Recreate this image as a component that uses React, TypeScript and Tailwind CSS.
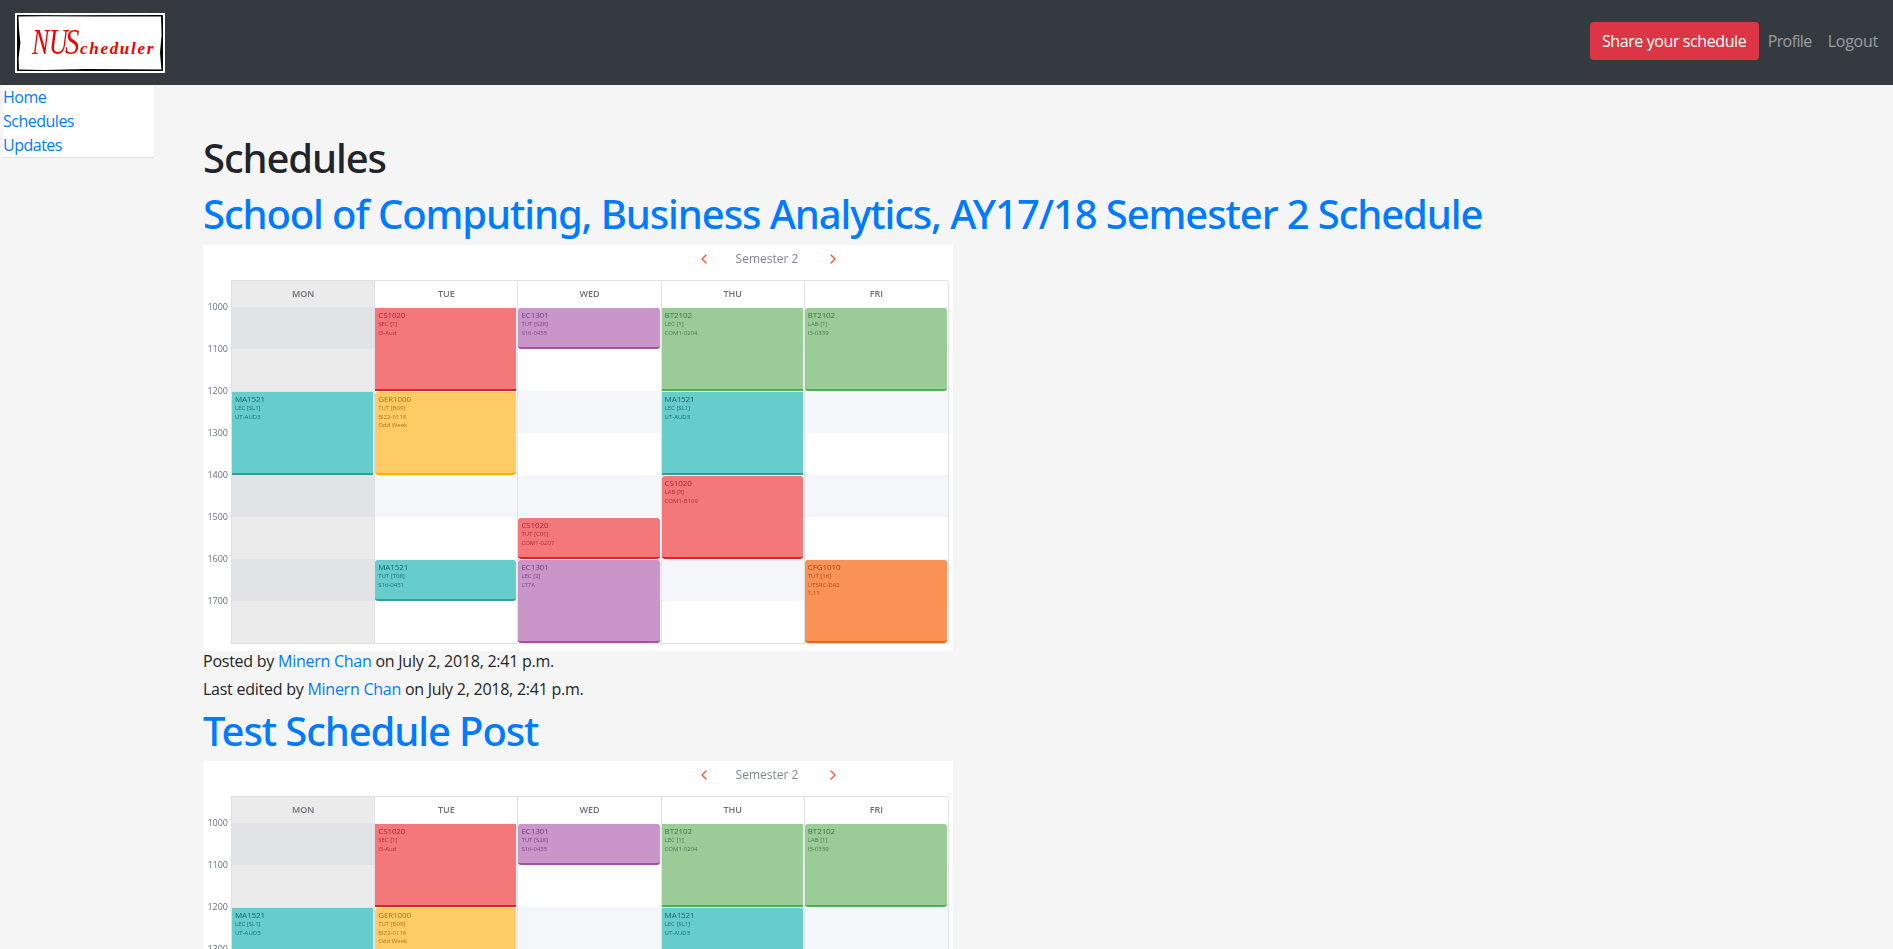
import React from 'react';
import { ChevronLeft, ChevronRight } from 'lucide-react';

type Ev = {
  row: string;
  lines: string[];
  color: string;
  text: string;
  square?: boolean;
};

const RED = 'bg-[#f4777a] border-[#e61e27]';
const PURPLE = 'bg-[#ca96c9] border-[#a552a5]';
const GREEN = 'bg-[#9bcc98] border-[#4caf50]';
const TEAL = 'bg-[#66cdcc] border-[#349e9c]';
const YELLOW = 'bg-[#ffcb65] border-[#ffb000]';
const ORANGE = 'bg-[#fa9155] border-[#e86515]';

const days: { name: string; events: Ev[] }[] = [
  {
    name: 'MON',
    events: [
      { row: 'row-start-3 row-span-2', lines: ['MA1521', 'LEC [SL1]', 'UT-AUD3'], color: TEAL, text: 'text-[#1d5f63]', square: true },
    ],
  },
  {
    name: 'TUE',
    events: [
      { row: 'row-start-1 row-span-2', lines: ['CS1020', 'SEC [1]', 'I3-Aud'], color: RED, text: 'text-[#a3283a]', square: true },
      { row: 'row-start-3 row-span-2', lines: ['GER1000', 'TUT [B09]', 'BIZ2-0118', 'Odd Week'], color: YELLOW, text: 'text-[#9a7420]' },
      { row: 'row-start-7 row-span-1', lines: ['MA1521', 'TUT [T08]', 'S16-0431'], color: TEAL, text: 'text-[#1d5f63]' },
    ],
  },
  {
    name: 'WED',
    events: [
      { row: 'row-start-1 row-span-1', lines: ['EC1301', 'TUT [S28]', 'S16-0435'], color: PURPLE, text: 'text-[#6d3f7c]' },
      { row: 'row-start-6 row-span-1', lines: ['CS1020', 'TUT [C01]', 'COM1-0207'], color: RED, text: 'text-[#a3283a]' },
      { row: 'row-start-7 row-span-2', lines: ['EC1301', 'LEC [2]', 'LT7A'], color: PURPLE, text: 'text-[#6d3f7c]' },
    ],
  },
  {
    name: 'THU',
    events: [
      { row: 'row-start-1 row-span-2', lines: ['BT2102', 'LEC [1]', 'COM1-0204'], color: GREEN, text: 'text-[#3f7044]', square: true },
      { row: 'row-start-3 row-span-2', lines: ['MA1521', 'LEC [SL1]', 'UT-AUD3'], color: TEAL, text: 'text-[#1d5f63]', square: true },
      { row: 'row-start-5 row-span-2', lines: ['CS1020', 'LAB [8]', 'COM1-B109'], color: RED, text: 'text-[#a3283a]' },
    ],
  },
  {
    name: 'FRI',
    events: [
      { row: 'row-start-1 row-span-2', lines: ['BT2102', 'LAB [1]', 'I3-0339'], color: GREEN, text: 'text-[#3f7044]' },
      { row: 'row-start-7 row-span-2', lines: ['CFG1010', 'TUT [16]', 'UTSRC-DA2', '1,11'], color: ORANGE, text: 'text-[#9a4a18]' },
    ],
  },
];

const hours = ['1000', '1100', '1200', '1300', '1400', '1500', '1600', '1700'];
const stripes = ['row-start-1', 'row-start-3', 'row-start-5', 'row-start-7'];

const Timetable = () => (
  <div className="w-[750px] h-[406px] bg-white flex flex-col font-['Open_Sans',sans-serif] tracking-normal blur-[0.3px]">
    <div className="h-[35px] pt-[5px] flex items-start">
      <ChevronLeft className="ml-[493px] mt-[1px] w-[16px] h-[16px] text-[#ff5138]" strokeWidth={2} />
      <span className="ml-[23px] w-[64px] text-[12px] leading-[17px] text-[#7f8590] text-center whitespace-nowrap">Semester 2</span>
      <ChevronRight className="ml-[26px] mt-[1px] w-[16px] h-[16px] text-[#ff5138]" strokeWidth={2} />
    </div>
    <div className="flex">
      <div className="w-[28px] pt-[21px]">
        {hours.map((h) => (
          <div key={h} className="h-[42px] pr-[3px] text-right text-[9px] leading-[12px] text-[#69707a]">
            {h}
          </div>
        ))}
      </div>
      <div className="w-[718px] h-[364px] grid grid-cols-5 border border-[#dfe0e3] rounded-r-[3px]">
        {days.map((day) => (
          <div key={day.name} className={`border-r border-[#dfe0e3] last:border-r-0 ${day.name === 'MON' ? 'bg-[#ebebeb]' : ''}`}>
            <div className="h-[26px] flex items-center justify-center text-[9px] font-semibold text-[#69707a]">{day.name}</div>
            <div className="grid grid-rows-[repeat(8,42px)]">
              {stripes.map((s) => (
                <div
                  key={s}
                  className={`${s} col-start-1 ${day.name === 'MON' ? 'bg-[#e2e3e6]' : 'bg-[#f5f6fa]'}`}
                />
              ))}
              {day.events.map((ev) => (
                <div
                  key={ev.lines.join()}
                  className={`${ev.row} col-start-1 z-10 mr-[1px] mt-[1px] border-b-2 px-[3px] pt-[2px] overflow-hidden ${ev.square ? '' : 'rounded-[3px]'} ${ev.color} ${ev.text}`}
                >
                  <div className="text-[8px] leading-[10px] tracking-[-0.1px]">{ev.lines[0]}</div>
                  {ev.lines.slice(1).map((l) => (
                    <div key={l} className="text-[6px] leading-[8.6px] opacity-90">
                      {l}
                    </div>
                  ))}
                </div>
              ))}
            </div>
          </div>
        ))}
      </div>
    </div>
  </div>
);

const PostMeta = ({ label }: { label: string }) => (
  <p className="text-[16px] leading-[27.5px] text-[#212529]">
    {label} by <a className="text-[#007bff]">Minern Chan</a> on July 2, 2018, 2:41 p.m.
  </p>
);

const headingFont = "font-['Noto_Sans',sans-serif] font-medium text-[40px] leading-[48px] tracking-[-1.1px]";

export default function App() {
  return (
    <div className="h-[949px] overflow-hidden bg-[#f5f5f5] font-['Open_Sans',sans-serif] tracking-[-0.25px]">
      <nav className="h-[85px] bg-[#343a40] flex items-center pl-[15px] pr-[15px] justify-between">
        <a className="relative block w-[150px] h-[60px] bg-white overflow-hidden">
          <svg className="absolute inset-0" width="150" height="60" viewBox="0 0 150 60">
            <path d="M2 2 L50 2.2 L147 2 L147.5 3.4 L80 3.6 L30 3.2 L2 3.6 Z" fill="#000" />
            <path d="M2 2 L3.4 2 L4 16 L5.4 30 L3.6 45 L4 58 L2 58 Z" fill="#000" />
            <path d="M148 2 L146 3 L146.6 22 L145 40 L146.6 58 L148 58 Z" fill="#000" />
            <path d="M2 58 L2 56.4 L30 57 L70 56 L148 56.6 L148 58 Z" fill="#000" />
          </svg>
          <span className="absolute left-[17px] top-[12px] flex items-baseline font-['Liberation_Serif',serif] italic text-[#f00000] whitespace-nowrap">
            <span className="inline-block w-[33px] origin-left scale-x-[0.72] text-[36px] leading-[34px]">NU</span>
            <span className="inline-block w-[15px] text-[36px] leading-[34px] origin-left scale-x-[0.8]">S</span>
            <span className="text-[17px] font-bold tracking-[1.7px] leading-[34px]">cheduler</span>
          </span>
        </a>
        <div className="flex items-center mb-[3px]">
          <button className="h-[38px] w-[169px] bg-[#dc3545] text-white text-[16px] rounded-[4px] tracking-[-0.4px]">Share your schedule</button>
          <a className="ml-[9px] text-white/50 text-[16px] tracking-[-0.6px]">Profile</a>
          <a className="ml-[16px] text-white/50 text-[16px]">Logout</a>
        </div>
      </nav>
      <div className="flex items-start">
        <ul className="ml-[3px] w-[151px] bg-white border-b border-[#dee2e6] text-[#007bff] text-[16px] leading-[24px] tracking-[-0.5px]">
          <li>Home</li>
          <li>Schedules</li>
          <li>Updates</li>
        </ul>
        <main className="ml-[49px] pt-[49px]">
          <h1 className={`${headingFont} text-[#212529]`}>Schedules</h1>
          <a className={`${headingFont} block mt-[8px] text-[#007bff] whitespace-nowrap`}>
            School of Computing, Business Analytics, AY17/18 Semester 2 Schedule
          </a>
          <div className="mt-[7px]">
            <Timetable />
          </div>
          <div className="-mt-[3px]">
            <PostMeta label="Posted" />
            <PostMeta label="Last edited" />
          </div>
          <a className={`${headingFont} block mt-[4px] text-[#007bff]`}>Test Schedule Post</a>
          <div className="mt-[6px]">
            <Timetable />
          </div>
        </main>
      </div>
    </div>
  );
}
